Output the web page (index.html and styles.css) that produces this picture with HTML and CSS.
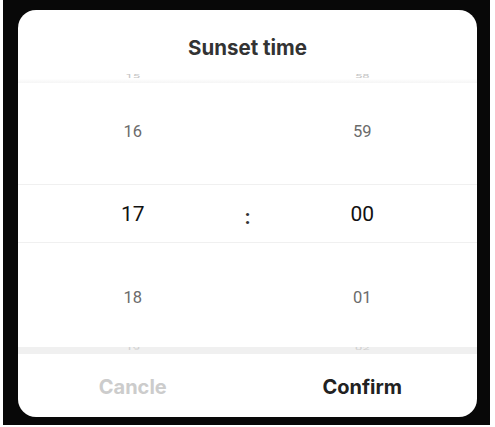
FILE: index.html
```html
<!DOCTYPE html>
<html>
<head>
<meta charset="utf-8">
<link rel="stylesheet" href="styles.css">
</head>
<body>
<div class="frame">
  <div class="card">
    <div class="title">Sunset time</div>
    <div class="picker">
      <div class="col">
        <div class="edge edge-top"><span class="ghost ghost-top">15</span></div>
        <div class="row row-up">16</div>
        <div class="row row-sel">17</div>
        <div class="row row-down">18</div>
        <div class="edge edge-bottom"><span class="ghost ghost-bottom">19</span></div>
      </div>
      <div class="sep">
        <div class="edge edge-top"></div>
        <div class="sep-mid"><span class="colon">:</span></div>
        <div class="edge edge-bottom"></div>
      </div>
      <div class="col">
        <div class="edge edge-top"><span class="ghost ghost-top">58</span></div>
        <div class="row row-up">59</div>
        <div class="row row-sel">00</div>
        <div class="row row-down">01</div>
        <div class="edge edge-bottom"><span class="ghost ghost-bottom">02</span></div>
      </div>
    </div>
    <div class="footer">
      <div class="btn btn-cancel">Cancle</div>
      <div class="btn btn-confirm">Confirm</div>
    </div>
  </div>
</div>
</body>
</html>
```
FILE: styles.css
```css
html, body {
  margin: 0;
  padding: 0;
  background: #ffffff;
}
body {
  width: 495px;
  height: 427px;
  overflow: hidden;
}
.frame {
  margin-left: 3px;
  width: 487px;
  height: 425px;
  box-sizing: border-box;
  background: #080808;
  padding: 10px 13px 8px 15px;
}
.card {
  width: 459px;
  height: 407px;
  background: #ffffff;
  border-radius: 18px;
  overflow: hidden;
  display: flex;
  flex-direction: column;
  font-family: "Inter", "Roboto", sans-serif;
}
.title {
  height: 62px;
  box-sizing: border-box;
  padding-top: 26px;
  line-height: 24px;
  text-align: center;
  font-size: 20.5px;
  font-weight: 700;
  color: #333333;
}
.picker {
  display: grid;
  grid-template-columns: 1fr 0 1fr;
  height: 282px;
}
.col, .sep {
  display: flex;
  flex-direction: column;
}
.edge {
  position: relative;
  overflow: hidden;
  display: flex;
  justify-content: center;
}
.edge-top {
  height: 11px;
  background: linear-gradient(#ffffff 0%, #ffffff 60%, #f5f5f5 100%);
}
.edge-bottom {
  height: 7px;
  background: #f0f0f0;
}
.ghost {
  font-family: "Roboto", sans-serif;
  font-size: 13px;
  color: #c4c4c4;
  line-height: 13px;
  display: block;
  transform: scaleY(0.35);
}
.ghost-top {
  margin-top: -2px;
}
.ghost-bottom {
  margin-top: -4px;
  color: #cfcfcf;
}
.row {
  display: flex;
  align-items: center;
  justify-content: center;
  font-family: "Roboto", sans-serif;
  box-sizing: border-box;
}
.row-up {
  height: 101px;
  padding-bottom: 5px;
  font-size: 16.5px;
  color: #6b6b6b;
}
.row-sel {
  height: 59px;
  border-top: 1px solid #f0f0f0;
  border-bottom: 1px solid #f0f0f0;
  font-size: 21px;
  color: #111111;
}
.row-down {
  height: 104px;
  padding-top: 4px;
  font-size: 16.5px;
  color: #6b6b6b;
}
.sep-mid {
  height: 264px;
  display: flex;
  align-items: center;
  justify-content: center;
}
.colon {
  font-family: "Roboto", sans-serif;
  font-size: 20px;
  font-weight: 700;
  color: #333333;
  margin-top: 4px;
}
.footer {
  flex: 1;
  display: grid;
  grid-template-columns: 1fr 1fr;
}
.btn {
  display: flex;
  align-items: center;
  justify-content: center;
  padding-top: 3px;
  font-size: 20px;
  font-weight: 700;
}
.btn-cancel {
  color: #cccccc;
}
.btn-confirm {
  color: #222222;
}
```
